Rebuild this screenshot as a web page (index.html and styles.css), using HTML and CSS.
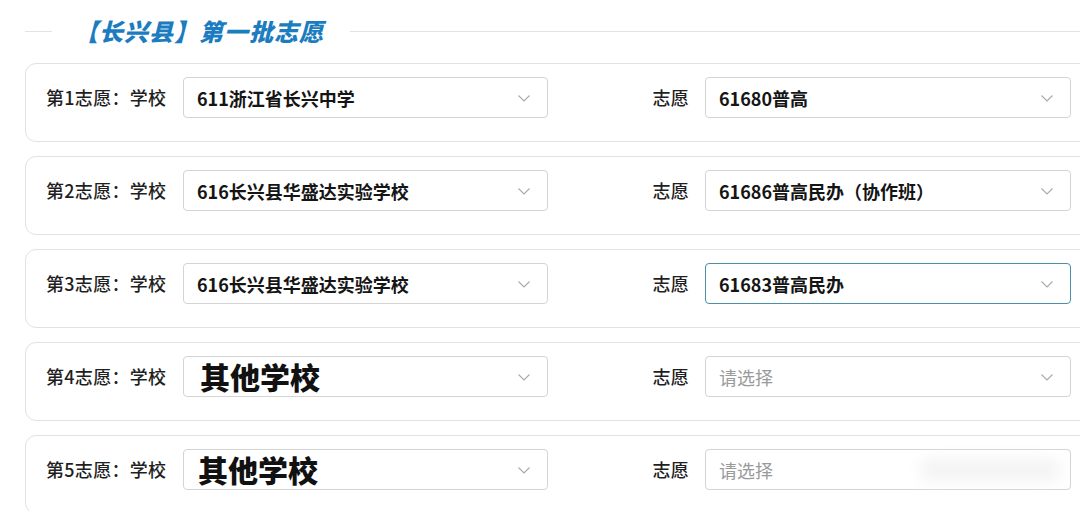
FILE: index.html
```html
<!DOCTYPE html>
<html lang="zh">
<head>
<meta charset="utf-8">
<link rel="stylesheet" href="styles.css">
</head>
<body>
<div class="page">
  <div class="title-row">
    <span class="line line-left"></span>
    <h2 class="title">【长兴县】第一批志愿</h2>
    <span class="line line-right"></span>
  </div>

  <div class="card">
    <div class="label">第1志愿：学校</div>
    <div class="select"><span class="value">611浙江省长兴中学</span><svg class="chev" viewBox="0 0 12 7"><path d="M0.5 0.5 L6 6 L11.5 0.5"/></svg></div>
    <div class="label right">志愿</div>
    <div class="select"><span class="value">61680普高</span><svg class="chev" viewBox="0 0 12 7"><path d="M0.5 0.5 L6 6 L11.5 0.5"/></svg></div>
  </div>

  <div class="card">
    <div class="label">第2志愿：学校</div>
    <div class="select"><span class="value">616长兴县华盛达实验学校</span><svg class="chev" viewBox="0 0 12 7"><path d="M0.5 0.5 L6 6 L11.5 0.5"/></svg></div>
    <div class="label right">志愿</div>
    <div class="select"><span class="value">61686普高民办（协作班）</span><svg class="chev" viewBox="0 0 12 7"><path d="M0.5 0.5 L6 6 L11.5 0.5"/></svg></div>
  </div>

  <div class="card">
    <div class="label">第3志愿：学校</div>
    <div class="select"><span class="value">616长兴县华盛达实验学校</span><svg class="chev" viewBox="0 0 12 7"><path d="M0.5 0.5 L6 6 L11.5 0.5"/></svg></div>
    <div class="label right">志愿</div>
    <div class="select focused"><span class="value">61683普高民办</span><svg class="chev" viewBox="0 0 12 7"><path d="M0.5 0.5 L6 6 L11.5 0.5"/></svg></div>
  </div>

  <div class="card">
    <div class="label">第4志愿：学校</div>
    <div class="select"><span class="value big">其他学校</span><svg class="chev" viewBox="0 0 12 7"><path d="M0.5 0.5 L6 6 L11.5 0.5"/></svg></div>
    <div class="label right">志愿</div>
    <div class="select"><span class="placeholder">请选择</span><svg class="chev" viewBox="0 0 12 7"><path d="M0.5 0.5 L6 6 L11.5 0.5"/></svg></div>
  </div>

  <div class="card">
    <div class="label">第5志愿：学校</div>
    <div class="select"><span class="value big b5">其他学校</span><svg class="chev" viewBox="0 0 12 7"><path d="M0.5 0.5 L6 6 L11.5 0.5"/></svg></div>
    <div class="label right">志愿</div>
    <div class="select blurred"><span class="placeholder">请选择</span><span class="smudge"></span></div>
  </div>
</div>
</body>
</html>
```

FILE: styles.css
```css
* { box-sizing: border-box; }
html, body {
  margin: 0;
  padding: 0;
  background: #ffffff;
  overflow: hidden;
  width: 1080px;
  height: 511px;
}
body {
  font-family: "Noto Sans CJK SC", "Noto Sans", "Liberation Sans", sans-serif;
  color: #1e1e1e;
}
.page {
  padding-left: 25px;
  width: 1100px;
}
.title-row {
  display: flex;
  align-items: center;
  height: 63px;
  padding-bottom: 1px;
}
.line {
  height: 1px;
  background: #e3e3e3;
}
.line-left { width: 27px; }
.line-right { flex: 1; }
.title {
  margin: 0 26px 0 22px;
  font-size: 24px;
  font-weight: 900;
  font-style: italic;
  letter-spacing: 1px;
  color: #1b7cbf;
  line-height: 30px;
}
.card {
  display: grid;
  grid-template-columns: 137px 365px 157px 366px;
  align-items: start;
  height: 79px;
  width: 1075px;
  margin-bottom: 14px;
  padding: 13px 0 0 20px;
  border: 1px solid #e2e2e2;
  border-radius: 11px;
  background: #fff;
}
.label {
  font-size: 18px;
  font-weight: 500;
  line-height: 41px;
  color: #1f1f1f;
  white-space: nowrap;
  letter-spacing: 0.3px;
}
.label.right {
  text-align: right;
  padding-right: 16px;
}
.select {
  position: relative;
  height: 41px;
  border: 1px solid #d4d4d4;
  border-radius: 4px;
  background: #fff;
  display: flex;
  align-items: center;
  padding-left: 13px;
}
.select.focused {
  border-color: #4b90a6;
}
.value {
  font-size: 18px;
  font-weight: 700;
  color: #151515;
  white-space: nowrap;
}
.value.big {
  font-size: 30px;
  font-weight: 900;
  color: #111;
  padding-left: 3px;
  line-height: 41px;
}
.value.b5 { padding-left: 1px; }
.placeholder {
  font-size: 18px;
  color: #9a9a9a;
}
.chev {
  position: absolute;
  right: 17px;
  top: 17px;
  width: 12px;
  height: 7px;
  fill: none;
  stroke: #a9a9a9;
  stroke-width: 1.1;
}
.smudge {
  position: absolute;
  right: 10px;
  top: 8px;
  width: 140px;
  height: 24px;
  background: #f4f4f4;
  filter: blur(7px);
  border-radius: 10px;
}
```
